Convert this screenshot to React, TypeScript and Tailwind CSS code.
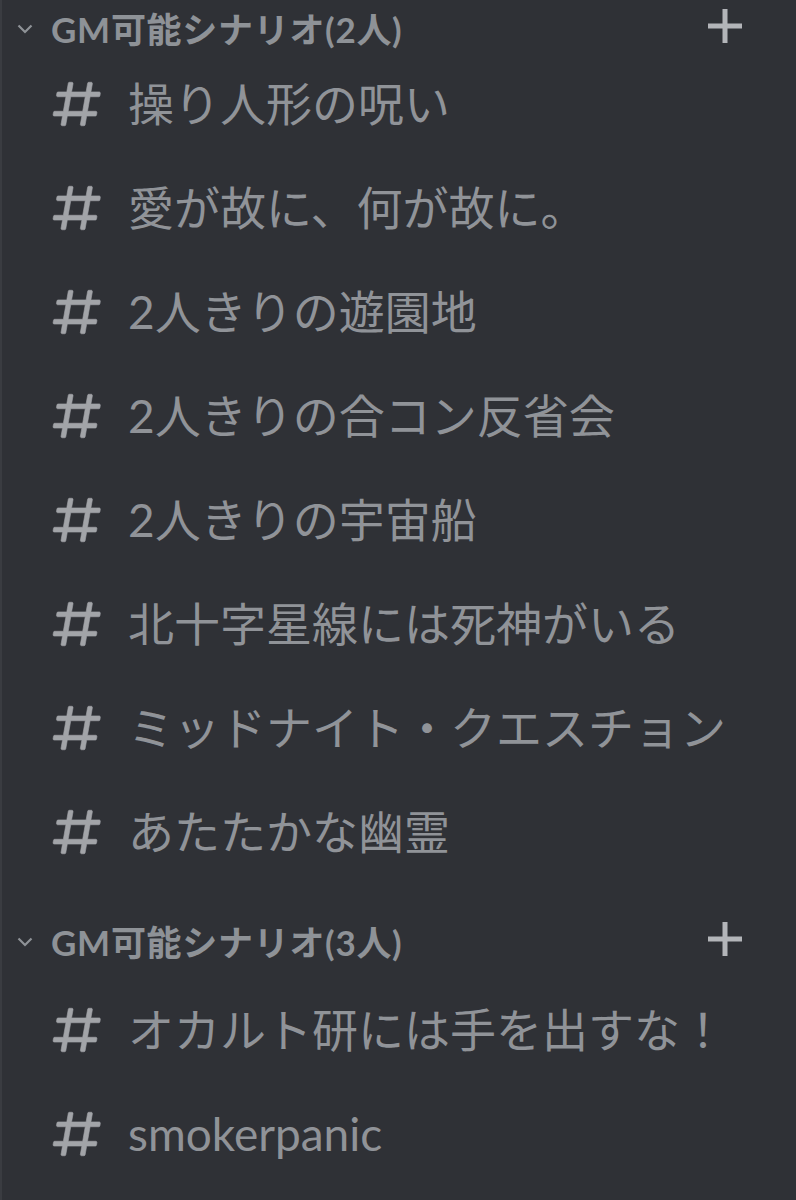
import React from "react";

const HASH =
  "M5.88657 21C5.57547 21 5.3399 20.7189 5.39427 20.4126L6.00001 17H2.59511C2.28449 17 2.04905 16.7198 2.10259 16.4138L2.27759 15.4138C2.31946 15.1746 2.52722 15 2.77011 15H6.35001L7.41001 9H4.00511C3.69449 9 3.45905 8.71977 3.51259 8.41381L3.68759 7.41381C3.72946 7.17456 3.93722 7 4.18011 7H7.76001L8.39677 3.41262C8.43914 3.17391 8.64664 3 8.88907 3H9.87344C10.1845 3 10.4201 3.28107 10.3657 3.58738L9.76001 7H15.76L16.3968 3.41262C16.4391 3.17391 16.6466 3 16.8891 3H17.8734C18.1845 3 18.4201 3.28107 18.3657 3.58738L17.76 7H21.1649C21.4755 7 21.711 7.28023 21.6574 7.58619L21.4824 8.58619C21.4406 8.82544 21.2328 9 20.9899 9H17.41L16.35 15H19.7549C20.0655 15 20.301 15.2802 20.2474 15.5862L20.0724 16.5862C20.0306 16.8254 19.8228 17 19.5799 17H16L15.3632 20.5874C15.3209 20.8261 15.1134 21 14.8709 21H13.8866C13.5755 21 13.3399 20.7189 13.3943 20.4126L14 17H8.00001L7.36325 20.5874C7.32088 20.8261 7.11337 21 6.87094 21H5.88657ZM9.41045 9L8.35045 15H14.3504L15.4104 9H9.41045Z";

function Hash() {
  return (
    <svg width="58" height="58" viewBox="0 0 24 24" className="shrink-0">
      <path d={HASH} fill="#a2a4a8" stroke="#a2a4a8" strokeWidth="0.25" fillRule="evenodd" />
    </svg>
  );
}

function Chevron() {
  return (
    <svg width="16" height="10" viewBox="0 0 16 10" className="shrink-0">
      <path d="M1.5 1.5 L8 8 L14.5 1.5" fill="none" stroke="#8e9297" strokeWidth="2.2" />
    </svg>
  );
}

function Plus() {
  return (
    <svg width="36" height="36" viewBox="0 0 36 36" className="shrink-0">
      <rect x="15.5" y="1" width="5" height="34" fill="#b3b5b9" />
      <rect x="1" y="15.5" width="34" height="5" fill="#b3b5b9" />
    </svg>
  );
}

function Header({ title, cls }: { title: string; cls: string }) {
  return (
    <div className={cls}>
      <div className="flex h-[52px] items-center pl-[15px] pr-[53px]">
        <div className="mt-[6px] flex">
          <Chevron />
        </div>
        <span className="ml-[18px] mt-[6px] flex-1 text-[35px] font-bold leading-none tracking-[0.02em] text-[#8e9297]">
          {title}
        </span>
        <Plus />
      </div>
    </div>
  );
}

function Channel({ name }: { name: string }) {
  return (
    <div className="flex h-[104px] items-center pl-[46px]">
      <Hash />
      <span className="ml-[22px] text-[46px] leading-none text-[#909398] whitespace-nowrap">
        {name}
      </span>
    </div>
  );
}

const group1 = [
  "操り人形の呪い",
  "愛が故に、何が故に。",
  "2人きりの遊園地",
  "2人きりの合コン反省会",
  "2人きりの宇宙船",
  "北十字星線には死神がいる",
  "ミッドナイト・クエスチョン",
  "あたたかな幽霊",
];

const group2 = ["オカルト研には手を出すな！", "smokerpanic"];

export default function App() {
  return (
    <div
      className="h-[1200px] w-[796px] overflow-hidden border-l-2 border-[#3a3c41] bg-[#2f3136]"
      style={{ fontFamily: 'Lato, "Noto Sans CJK JP", "Noto Sans", sans-serif' }}
    >
      <Header title="GM可能シナリオ(2人)" cls="" />
      {group1.map((n) => (
        <Channel key={n} name={n} />
      ))}
      <Header title="GM可能シナリオ(3人)" cls="pt-[29px] pb-[13px]" />
      {group2.map((n) => (
        <Channel key={n} name={n} />
      ))}
    </div>
  );
}
